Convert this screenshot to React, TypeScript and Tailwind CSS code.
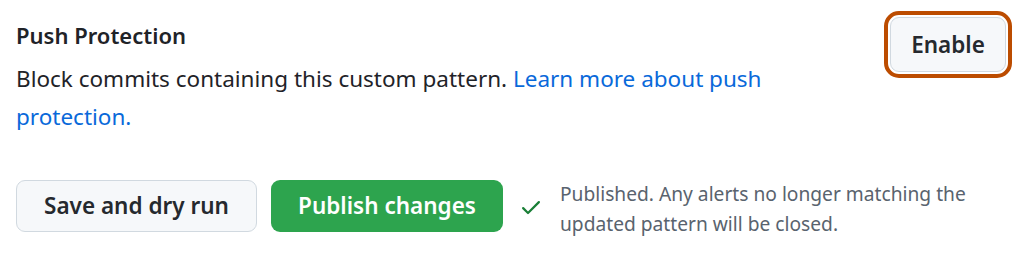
import React from "react";

function CheckIcon() {
  return (
    <svg viewBox="0 0 16 16" width={24} height={24} fill="#1a7f37" aria-hidden="true">
      <path d="M13.78 4.22a.75.75 0 0 1 0 1.06l-7.25 7.25a.75.75 0 0 1-1.06 0L2.22 9.28a.75.75 0 0 1 1.06-1.06L6 10.94l6.72-6.72a.75.75 0 0 1 1.06 0Z" />
    </svg>
  );
}

export default function App() {
  return (
    <div className="w-[1023px] h-[258px] bg-white pl-4 pr-[17px] pt-[17px] text-[#1f2328] font-['Noto_Sans',sans-serif]">
      <div className="flex justify-between">
        <div className="w-[820px]">
          <h3 className="text-[22px] leading-[36px] font-semibold">Push Protection</h3>
          <p className="text-[22.5px] leading-[38px] mt-[7px]">
            Block commits containing this custom pattern.{" "}
            <a href="#" className="text-[#0969da]">Learn more about push protection.</a>
          </p>
        </div>
        <button className="h-[55px] w-[116px] rounded-[9px] border border-[#d1d9e0] bg-[#f6f8fa] text-[22.5px] font-semibold text-[#25292e] outline-[4px] outline-solid outline-[#bc4c00] outline-offset-[2px]">
          Enable
        </button>
      </div>
      <div className="mt-[41px] flex items-start">
        <button className="mt-[3px] h-[52px] w-[241px] rounded-[9px] border border-[#d1d9e0] bg-[#f6f8fa] text-[22.5px] font-semibold text-[#25292e]">
          Save and dry run
        </button>
        <button className="mt-[3px] ml-[14px] h-[52px] w-[232px] rounded-[9px] bg-[#2da44e] text-[22.5px] font-semibold text-white">
          Publish changes
        </button>
        <div className="ml-[16px] mr-[17px] mt-[18px]">
          <CheckIcon />
        </div>
        <p className="mt-[2px] text-[19.2px] leading-[30px] text-[#59636e] w-[430px]">
          Published. Any alerts no longer matching the updated pattern will be closed.
        </p>
      </div>
    </div>
  );
}
